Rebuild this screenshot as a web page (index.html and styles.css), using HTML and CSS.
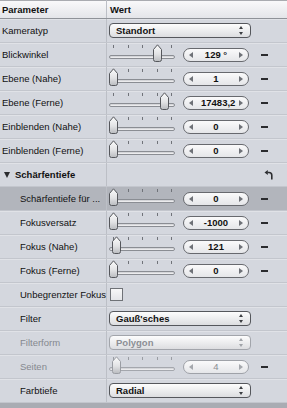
FILE: index.html
```html
<!DOCTYPE html>
<html lang="de">
<head>
  <meta charset="UTF-8">
  <title>Kamera – Parameter</title>
  <link rel="stylesheet" href="styles.css">
</head>
<body>
  <svg width="0" height="0" class="defs">
    <defs>
      <linearGradient id="thumbFill" x1="0" y1="0" x2="0" y2="1">
        <stop offset="0" stop-color="#fbfbfb"/>
        <stop offset="0.55" stop-color="#e2e3e5"/>
        <stop offset="1" stop-color="#b9bbbf"/>
      </linearGradient>
    </defs>
  </svg>

  <div class="panel">
    <!-- Kopfzeile -->
    <div class="row head">
      <div class="name">Parameter</div>
      <div class="value">Wert</div>
    </div>

    <div class="row">
      <div class="name">Kameratyp</div>
      <div class="value">
        <div class="popup"><span>Standort</span><i class="updown"></i></div>
      </div>
    </div>

    <div class="row">
      <div class="name">Blickwinkel</div>
      <div class="value">
        <div class="slider"><div class="ticks"><b></b><b></b><b></b><b></b><b></b></div><div class="track"></div><svg class="thumb" style="left: 44px" viewBox="0 0 9 18"><path d="M0.5 5.5 L4.5 0.8 L8.5 5.5 V15.5 Q8.5 17.5 6.5 17.5 H2.5 Q0.5 17.5 0.5 15.5 Z"/></svg></div>
        <div class="stepper"><i class="arr left"></i><span>129 °</span><i class="arr right"></i></div>
        <div class="minus"></div>
      </div>
    </div>

    <div class="row">
      <div class="name">Ebene (Nahe)</div>
      <div class="value">
        <div class="slider"><div class="ticks"><b></b><b></b><b></b><b></b><b></b></div><div class="track"></div><svg class="thumb" style="left: 0px" viewBox="0 0 9 18"><path d="M0.5 5.5 L4.5 0.8 L8.5 5.5 V15.5 Q8.5 17.5 6.5 17.5 H2.5 Q0.5 17.5 0.5 15.5 Z"/></svg></div>
        <div class="stepper"><i class="arr left"></i><span>1</span><i class="arr right"></i></div>
        <div class="minus"></div>
      </div>
    </div>

    <div class="row">
      <div class="name">Ebene (Ferne)</div>
      <div class="value">
        <div class="slider"><div class="ticks"><b></b><b></b><b></b><b></b><b></b></div><div class="track"></div><svg class="thumb" style="left: 51px" viewBox="0 0 9 18"><path d="M0.5 5.5 L4.5 0.8 L8.5 5.5 V15.5 Q8.5 17.5 6.5 17.5 H2.5 Q0.5 17.5 0.5 15.5 Z"/></svg></div>
        <div class="stepper"><i class="arr left"></i><span class="clip">17483,2</span><i class="arr right"></i></div>
        <div class="minus"></div>
      </div>
    </div>

    <div class="row">
      <div class="name">Einblenden (Nahe)</div>
      <div class="value">
        <div class="slider"><div class="ticks"><b></b><b></b><b></b><b></b><b></b></div><div class="track"></div><svg class="thumb" style="left: 0px" viewBox="0 0 9 18"><path d="M0.5 5.5 L4.5 0.8 L8.5 5.5 V15.5 Q8.5 17.5 6.5 17.5 H2.5 Q0.5 17.5 0.5 15.5 Z"/></svg></div>
        <div class="stepper"><i class="arr left"></i><span>0</span><i class="arr right"></i></div>
        <div class="minus"></div>
      </div>
    </div>

    <div class="row">
      <div class="name">Einblenden (Ferne)</div>
      <div class="value">
        <div class="slider"><div class="ticks"><b></b><b></b><b></b><b></b><b></b></div><div class="track"></div><svg class="thumb" style="left: 0px" viewBox="0 0 9 18"><path d="M0.5 5.5 L4.5 0.8 L8.5 5.5 V15.5 Q8.5 17.5 6.5 17.5 H2.5 Q0.5 17.5 0.5 15.5 Z"/></svg></div>
        <div class="stepper"><i class="arr left"></i><span>0</span><i class="arr right"></i></div>
        <div class="minus"></div>
      </div>
    </div>

    <!-- Gruppe Schärfentiefe -->
    <div class="row group">
      <div class="name"><i class="disclosure"></i>Schärfentiefe</div>
      <div class="value">
        <svg class="reset" viewBox="0 0 9 10"><path class="reset-line" d="M3.5 2.5 H5 A2.8 2.8 0 0 1 7.8 5.3 V9.5"/><path d="M0.5 2.5 L3.8 0 V5 Z"/></svg>
      </div>
    </div>

    <div class="row sub selected">
      <div class="name">Schärfentiefe für ...</div>
      <div class="value">
        <div class="slider"><div class="ticks"><b></b><b></b><b></b><b></b><b></b></div><div class="track"></div><svg class="thumb" style="left: 0px" viewBox="0 0 9 18"><path d="M0.5 5.5 L4.5 0.8 L8.5 5.5 V15.5 Q8.5 17.5 6.5 17.5 H2.5 Q0.5 17.5 0.5 15.5 Z"/></svg></div>
        <div class="stepper"><i class="arr left"></i><span>0</span><i class="arr right"></i></div>
        <div class="minus"></div>
      </div>
    </div>

    <div class="row sub">
      <div class="name">Fokusversatz</div>
      <div class="value">
        <div class="slider"><div class="ticks"><b></b><b></b><b></b><b></b><b></b></div><div class="track"></div><svg class="thumb" style="left: 0px" viewBox="0 0 9 18"><path d="M0.5 5.5 L4.5 0.8 L8.5 5.5 V15.5 Q8.5 17.5 6.5 17.5 H2.5 Q0.5 17.5 0.5 15.5 Z"/></svg></div>
        <div class="stepper"><i class="arr left"></i><span>-1000</span><i class="arr right"></i></div>
        <div class="minus"></div>
      </div>
    </div>

    <div class="row sub">
      <div class="name">Fokus (Nahe)</div>
      <div class="value">
        <div class="slider"><div class="ticks"><b></b><b></b><b></b><b></b><b></b></div><div class="track"></div><svg class="thumb" style="left: 3px" viewBox="0 0 9 18"><path d="M0.5 5.5 L4.5 0.8 L8.5 5.5 V15.5 Q8.5 17.5 6.5 17.5 H2.5 Q0.5 17.5 0.5 15.5 Z"/></svg></div>
        <div class="stepper"><i class="arr left"></i><span>121</span><i class="arr right"></i></div>
        <div class="minus"></div>
      </div>
    </div>

    <div class="row sub">
      <div class="name">Fokus (Ferne)</div>
      <div class="value">
        <div class="slider"><div class="ticks"><b></b><b></b><b></b><b></b><b></b></div><div class="track"></div><svg class="thumb" style="left: 0px" viewBox="0 0 9 18"><path d="M0.5 5.5 L4.5 0.8 L8.5 5.5 V15.5 Q8.5 17.5 6.5 17.5 H2.5 Q0.5 17.5 0.5 15.5 Z"/></svg></div>
        <div class="stepper"><i class="arr left"></i><span>0</span><i class="arr right"></i></div>
        <div class="minus"></div>
      </div>
    </div>

    <div class="row sub">
      <div class="name">Unbegrenzter Fokus</div>
      <div class="value">
        <div class="checkbox"></div>
      </div>
    </div>

    <div class="row sub">
      <div class="name">Filter</div>
      <div class="value">
        <div class="popup"><span>Gauß'sches</span><i class="updown"></i></div>
      </div>
    </div>

    <div class="row sub disabled">
      <div class="name">Filterform</div>
      <div class="value">
        <div class="popup"><span>Polygon</span><i class="updown"></i></div>
      </div>
    </div>

    <div class="row sub disabled">
      <div class="name">Seiten</div>
      <div class="value">
        <div class="slider"><div class="ticks"><b></b><b></b><b></b><b></b><b></b></div><div class="track"></div><svg class="thumb" style="left: 3px" viewBox="0 0 9 18"><path d="M0.5 5.5 L4.5 0.8 L8.5 5.5 V15.5 Q8.5 17.5 6.5 17.5 H2.5 Q0.5 17.5 0.5 15.5 Z"/></svg></div>
        <div class="stepper"><i class="arr left"></i><span>4</span><i class="arr right"></i></div>
        <div class="minus"></div>
      </div>
    </div>

    <div class="row sub">
      <div class="name">Farbtiefe</div>
      <div class="value">
        <div class="popup"><span>Radial</span><i class="updown"></i></div>
      </div>
    </div>

    <div class="footer"></div>
  </div>
</body>
</html>
```

FILE: styles.css
```css
/* Grundlayout */
body {
  margin: 0;
  background: #d4d7de;
  font-family: "Liberation Sans", Arial, sans-serif;
  font-size: 9.5px;
  color: #111;
}

.defs {
  position: absolute;
}

.panel {
  width: 287px;
  height: 408px;
  display: flex;
  flex-direction: column;
  background: #d4d7de;
  overflow: hidden;
}

/* Zeilen */
.row {
  display: grid;
  grid-template-columns: 107px 1fr;
  height: 23px;
  border-bottom: 1px solid #c3c6cd;
  box-shadow: inset 0 1px 0 #e0e2e7;
}

.row .name {
  display: flex;
  align-items: center;
  padding-left: 2px;
  border-right: 1px solid #bcbfc6;
  white-space: nowrap;
  overflow: hidden;
}

.row .value {
  display: flex;
  align-items: center;
  padding-left: 2px;
}

/* Kopfzeile */
.row.head {
  height: 18px;
  border-bottom: 1px solid #8f9298;
  background: linear-gradient(#fafafb, #e4e5e9);
  box-shadow: inset 0 1px 0 #a9abb0;
  font-weight: bold;
}

.row.head .value {
  padding-left: 3px;
}

.row.sub .name {
  padding-left: 20px;
}

.row.group .name {
  padding-left: 4px;
  font-weight: bold;
}

.row.selected {
  background: #b2b5bc;
  box-shadow: none;
}

.row.disabled .name {
  color: #85888f;
}

.footer {
  flex: 1;
  background: #a9acb3;
}

/* Aufklapp-Dreieck */
.disclosure {
  width: 0;
  height: 0;
  border-left: 3.5px solid transparent;
  border-right: 3.5px solid transparent;
  border-top: 6px solid #2a2b2e;
  margin-right: 5px;
}

.reset {
  width: 9px;
  height: 10px;
  margin-left: 155px;
  fill: #2c2d30;
}

.reset-line {
  fill: none;
  stroke: #2c2d30;
  stroke-width: 1.6;
}

/* Popup-Menü */
.popup {
  width: 140px;
  height: 13px;
  box-sizing: content-box;
  border: 1px solid #55575c;
  border-radius: 4px;
  background: linear-gradient(#fdfdfd, #e9eaec 60%, #dcdde0);
  display: flex;
  align-items: center;
  padding: 0;
  font-weight: bold;
}

.popup span {
  flex: 1;
  padding-left: 6px;
}

.updown {
  width: 5px;
  height: 9px;
  margin-right: 6px;
  position: relative;
}

.updown::before,
.updown::after {
  content: "";
  position: absolute;
  left: 0;
  border-left: 2.5px solid transparent;
  border-right: 2.5px solid transparent;
}

.updown::before {
  top: 0;
  border-bottom: 3px solid #3c3e42;
}

.updown::after {
  bottom: 0;
  border-top: 3px solid #3c3e42;
}

.row.disabled .popup {
  border-color: #a2a5ab;
  color: #8c8f95;
}

.row.disabled .updown::before {
  border-bottom-color: #a0a3a8;
}

.row.disabled .updown::after {
  border-top-color: #a0a3a8;
}

/* Schieberegler */
.slider {
  position: relative;
  width: 66px;
  height: 21px;
  align-self: flex-start;
}

.ticks {
  display: flex;
  justify-content: space-between;
  padding: 0 3px 0 4px;
  margin-top: 2px;
  height: 3px;
}

.ticks b {
  width: 1px;
  background: #707379;
}

.track {
  margin-top: 7px;
  height: 2px;
  border: 1px solid #8a8d93;
  border-radius: 3px;
  background: linear-gradient(#c9cbcf, #f6f6f7);
}

.thumb {
  position: absolute;
  top: 1px;
  width: 9px;
  height: 18px;
}

.thumb path {
  fill: url(#thumbFill);
  stroke: #55575c;
  stroke-width: 1;
}

.row.disabled .ticks b {
  background: #9a9da3;
}

.row.disabled .track {
  border-color: #a4a7ad;
}

.row.disabled .thumb path {
  stroke: #9a9da3;
}

/* Zahlenfeld */
.stepper {
  width: 64px;
  height: 12px;
  box-sizing: content-box;
  margin-left: 8px;
  border: 1px solid #67696e;
  border-radius: 8px;
  background: linear-gradient(#fafafb, #e5e6e9);
  display: flex;
  align-items: center;
  padding: 0;
  font-weight: bold;
}

.stepper span {
  flex: 1;
  text-align: center;
  overflow: hidden;
  white-space: nowrap;
}

.stepper span.clip {
  text-align: left;
  padding-left: 8px;
}

.arr {
  width: 0;
  height: 0;
  border-top: 3px solid transparent;
  border-bottom: 3px solid transparent;
}

.arr.left {
  margin-left: 5px;
  border-right: 4px solid #6e7177;
}

.arr.right {
  margin-right: 5px;
  border-left: 4px solid #6e7177;
}

.row.disabled .stepper {
  border-color: #9fa2a8;
  color: #8a8d93;
  font-weight: normal;
}

.row.disabled .arr.left {
  border-right-color: #a5a8ad;
}

.row.disabled .arr.right {
  border-left-color: #a5a8ad;
}

/* Entfernen */
.minus {
  width: 7px;
  height: 2px;
  margin-left: 12px;
  background: #2a2b2e;
}

/* Kontrollkästchen */
.checkbox {
  width: 11px;
  height: 11px;
  margin-left: 1px;
  border: 1px solid #6f7277;
  background: linear-gradient(#f7f7f8, #e4e5e8);
}
```
